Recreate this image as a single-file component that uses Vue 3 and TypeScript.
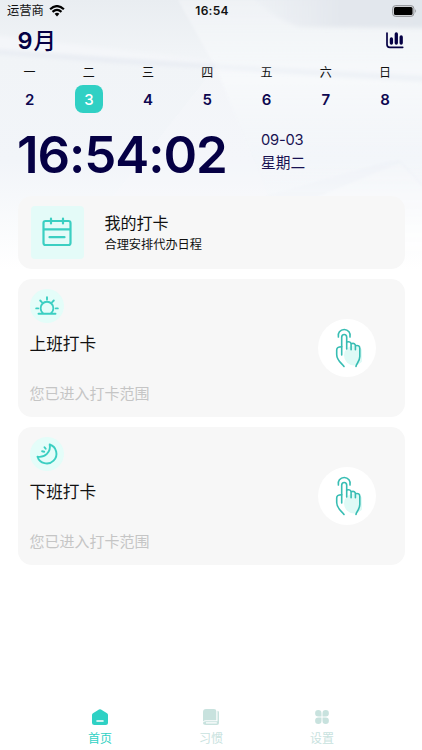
<script setup lang="ts">
interface Day { label: string; date: number }
interface Shift { title: string; hint: string; kind: 'sun' | 'moon' }
interface Tab { label: string; icon: 'home' | 'book' | 'grid'; active: boolean }

const selected = 3
const days: Day[] = ['一', '二', '三', '四', '五', '六', '日'].map((label, i) => ({ label, date: i + 2 }))
const shifts: Shift[] = [
  { title: '上班打卡', hint: '您已进入打卡范围', kind: 'sun' },
  { title: '下班打卡', hint: '您已进入打卡范围', kind: 'moon' },
]
const tabs: Tab[] = [
  { label: '首页', icon: 'home', active: true },
  { label: '习惯', icon: 'book', active: false },
  { label: '设置', icon: 'grid', active: false },
]
</script>

<template>
  <div class="screen">
    <svg class="backdrop" viewBox="0 0 422 270" preserveAspectRatio="none" aria-hidden="true">
      <defs>
        <linearGradient id="base" x1="0" y1="0" x2="0" y2="1">
          <stop offset="0" stop-color="#e9edf1" />
          <stop offset=".2" stop-color="#f1f4f7" />
          <stop offset=".6" stop-color="#f2f5f9" />
          <stop offset="1" stop-color="#ffffff" />
        </linearGradient>
        <linearGradient id="beam" x1="0" y1="0" x2="0" y2="1">
          <stop offset="0" stop-color="#f3f5f8" stop-opacity=".6" />
          <stop offset=".4" stop-color="#f8fafc" stop-opacity=".8" />
          <stop offset="1" stop-color="#f5f7fa" stop-opacity="0" />
        </linearGradient>
        <linearGradient id="corner" x1="0" y1="0" x2="1" y2="0">
          <stop offset="0" stop-color="#e5e9ef" stop-opacity=".2" />
          <stop offset=".5" stop-color="#e3e7ed" />
          <stop offset="1" stop-color="#e1e6ec" />
        </linearGradient>
        <linearGradient id="facet" x1="0" y1="0" x2="0" y2="1">
          <stop offset="0" stop-color="#f0f3f8" />
          <stop offset="1" stop-color="#f4f6fa" stop-opacity="0" />
        </linearGradient>
        <linearGradient id="lit" x1="0" y1="0" x2="0" y2="1">
          <stop offset="0" stop-color="#f7f9fb" stop-opacity=".5" />
          <stop offset="1" stop-color="#fff" stop-opacity=".8" />
        </linearGradient>
        <filter id="soft" x="-10%" y="-30%" width="120%" height="160%"><feGaussianBlur stdDeviation="2" /></filter>
        <filter id="edge" x="-10%" y="-20%" width="120%" height="140%"><feGaussianBlur stdDeviation="1" /></filter>
      </defs>
      <rect width="422" height="270" fill="url(#base)" />
      <path d="M178 0H430V200H270L216 68Z" fill="url(#beam)" filter="url(#edge)" />
      <path d="M255 -10H430V28L300 27Q280 22 255 0Z" fill="url(#corner)" filter="url(#soft)" />
      <path d="M-10 35L216 61V65L120 59L-10 49Z" fill="#f4f6f9" filter="url(#soft)" />
      <path d="M-10 50L120 59L216 65V68L110 62L-10 53Z" fill="#e6eaf2" filter="url(#soft)" />
      <path d="M216 65L430 76V82L340 77L216 68Z" fill="#edf1f6" filter="url(#soft)" />
      <path d="M216 66L110 200H270Z" fill="#f7f9fb" opacity=".3" />
      <path d="M265 196L385 162L400 160L430 192V225H265Z" fill="url(#facet)" filter="url(#edge)" />
      <path d="M310 200L400 163L430 195V250H310Z" fill="url(#lit)" filter="url(#edge)" />
    </svg>

    <header class="status">
      <div class="carrier">
        <span>运营商</span>
        <svg width="16" height="12" viewBox="0 0 16 12">
          <g fill="none" stroke="#000" stroke-width="2.2">
            <path d="M1.1 4.3Q8-2.1 14.9 4.3" /><path d="M3.5 6.9Q8 2.9 12.5 6.9" />
          </g>
          <path d="M5.6 8.8Q8 6.9 10.4 8.8L8 11.4Z" fill="#000" />
        </svg>
      </div>
      <span class="status-time">16:54</span>
      <svg class="battery" width="25" height="12" viewBox="0 0 25 12">
        <rect x=".6" y=".6" width="21.3" height="10.8" rx="3" fill="#d5d7da" stroke="#92959a" />
        <rect x="2" y="2" width="18.5" height="8" rx="1.5" />
        <path d="M23.3 4Q25 6 23.3 8Z" fill="#85888d" />
      </svg>
    </header>

    <div class="heading">
      <h1><span>9</span>月</h1>
      <svg width="18" height="17" viewBox="0 0 18 17" fill="none" stroke="#050044" stroke-linecap="round">
        <path d="M1 1V12.5Q1 15.3 3.8 15.3H16.7" stroke-width="1.7" />
        <path d="M5.4 7V11M10.3 2V11M15.2 5V11" stroke-width="3.3" />
      </svg>
    </div>

    <div class="week">
      <div v-for="day in days" :key="day.date" class="day">
        <span class="weekday">{{ day.label }}</span>
        <span class="date" :class="{ selected: day.date === selected }">{{ day.date }}</span>
      </div>
    </div>

    <div class="now">
      <div class="clock">16:54:02</div>
      <div class="today"><span class="today-date">09-03</span><span>星期二</span></div>
    </div>

    <main class="cards">
      <section class="card plan">
        <div class="plan-icon">
          <svg width="30" height="30" viewBox="0 0 30 30" fill="none" stroke="#3bcfc2" stroke-width="2.2" stroke-linecap="round" stroke-linejoin="round">
            <rect x="1.5" y="4" width="27" height="24" rx="2" />
            <path d="M2 12.3H28M9 1.5V6.5M21 1.5V6.5M7.5 20.2H22.5" />
          </svg>
        </div>
        <div class="plan-text"><h2>我的打卡</h2><p>合理安排代办日程</p></div>
      </section>

      <section v-for="shift in shifts" :key="shift.kind" class="card shift">
        <div class="shift-info">
          <div class="badge">
            <svg v-if="shift.kind === 'sun'" width="24" height="20" viewBox="0 0 24 20" fill="none" stroke="#3bcfc2" stroke-width="1.9" stroke-linecap="round">
              <path d="M3.5 17.7H20.5M7.8 17A6.4 6.4 0 1 1 16.2 17M12 1.2V3.6M5.2 4.5L6.8 6.2M18.8 4.5L17.2 6.2M1.2 12.4H3.2M20.8 12.4H22.8" />
            </svg>
            <svg v-else width="24" height="24" viewBox="0 0 24 24" fill="none" stroke="#3bcfc2" stroke-width="1.9" stroke-linecap="round" stroke-linejoin="round">
              <path d="M14.7 2.5A9.7 9.7 0 1 1 2.5 14.7C9.8 16 16.2 10 14.7 2.5ZM7.1 9.3L9.2 9.7M9.5 5.2L10.7 6.8" />
            </svg>
          </div>
          <h2>{{ shift.title }}</h2>
          <p>{{ shift.hint }}</p>
        </div>
        <button class="punch" type="button">
          <svg width="30" height="42" viewBox="0 0 30 42" fill="none" stroke="#37bdb3" stroke-width="1.6" stroke-linecap="round" stroke-linejoin="round">
            <circle cx="22" cy="28.5" r="10" fill="#dffaf6" stroke="none" />
            <path d="M12 39.5C9.5 36 4.7 33.5 4.7 27.5V23C4.7 20.5 6.5 19.8 9.7 19.8" />
            <path d="M9.7 28V10.3Q9.7 7.5 12.2 7.5T14.7 10.3V22" />
            <path d="M14.7 15.1Q19.1 13.9 19.1 17.5V22.8M19.1 16.7Q23.4 15.5 23.4 19V22.8M23.4 18.7Q27.8 17.7 27.8 21.5V29.5C27.8 34.5 24.3 36.5 24 39.5" />
            <path d="M6.4 10A6 6 0 1 1 18 10" />
          </svg>
        </button>
      </section>
    </main>

    <nav class="tabs">
      <div v-for="tab in tabs" :key="tab.icon" class="tab" :class="{ active: tab.active }">
        <svg width="16" height="16" viewBox="0 0 16 16" fill="currentColor">
          <template v-if="tab.icon === 'home'">
            <path d="M7 .5Q8 0 9 .5L15 4.3Q16 5 16 6V13.5Q16 16 13.5 16H2.5Q0 16 0 13.5V6Q0 5 1 4.3Z" />
            <path d="M5 12H11" stroke="#fff" stroke-width="1.6" stroke-linecap="round" />
          </template>
          <template v-else-if="tab.icon === 'book'">
            <path d="M3 0H11Q13.3 0 13.3 2V11.2H3Q1 11.2 0 12.5V3Q0 0 3 0Z" />
            <path d="M14.5 1.8Q16 2 16 3.5V14Q16 16 14 16H3Q0 16 0 13.8Q.4 12.2 2.5 12.2H14.5ZM3 13.3V14.5H13.8V13.3Z" fill-rule="evenodd" />
          </template>
          <template v-else>
            <path d="M7.5 7.5H4.3A3.2 3.2 0 1 1 7.5 4.3ZM8.5 7.5V4.3A3.2 3.2 0 1 1 11.7 7.5ZM7.5 8.5V11.7A3.2 3.2 0 1 1 4.3 8.5ZM8.5 8.5H11.7A3.2 3.2 0 1 1 8.5 11.7Z" />
          </template>
        </svg>
        <span>{{ tab.label }}</span>
      </div>
    </nav>
  </div>
</template>

<style>
body { background: #fff; }
</style>

<style scoped>
.screen {
  position: relative;
  display: flex;
  flex-direction: column;
  height: 750px;
  overflow: hidden;
  color: #111;
  font-family: Inter, "Noto Sans CJK SC", sans-serif;
}
.screen > :not(.backdrop) { position: relative; }
.screen > .backdrop { position: absolute; top: 0; left: 0; width: 422px; height: 270px; }
h1, h2, p { margin: 0; font-weight: 400; }
svg { display: block; flex: none; }

.status {
  display: grid;
  grid-template-columns: 1fr auto 1fr;
  grid-template-rows: 22px;
  align-items: center;
  height: 22px;
  padding: 0 5px 0 7px;
}
.carrier { display: flex; align-items: center; gap: 5px; font-size: 12.3px; line-height: 22px; }
.carrier svg { margin-bottom: 1px; }
.status-time { font-size: 12px; font-weight: 600; letter-spacing: .25px; line-height: 22px; }
.battery { justify-self: end; margin-bottom: 1px; }

.heading {
  display: flex;
  justify-content: space-between;
  align-items: center;
  height: 38px;
  padding: 0 18px 0 17.5px;
  color: #050044;
}
.heading h1 { display: flex; align-items: center; gap: 1px; font-size: 22.5px; font-weight: 500; line-height: 36px; }
.heading h1 span { font-size: 23.5px; font-weight: 600; line-height: 38px; }
.heading svg { margin-bottom: 1px; }

.week { display: flex; width: 414.6px; height: 53px; }
.day { flex: 1; display: flex; flex-direction: column; align-items: center; }
.weekday { height: 25px; font-size: 12px; line-height: 25px; }
.date {
  width: 28px;
  height: 28px;
  border-radius: 8px;
  color: #0d0750;
  font-size: 15px;
  font-weight: 600;
  line-height: 29px;
  text-align: center;
}
.date.selected { background: #30d0c4; color: #fff; font-weight: 500; }

.now { display: flex; height: 82.5px; padding: 0 17px; color: #050044; }
.clock {
  width: 244px;
  font-size: 51px;
  font-weight: 560;
  letter-spacing: -1.05px;
  line-height: 84px;
  white-space: nowrap;
}
.today { display: flex; flex-direction: column; padding-top: 16px; font-size: 14.7px; line-height: 23px; color: #181252; }
.today-date { letter-spacing: -.2px; }

.cards { display: flex; flex-direction: column; gap: 10px; padding: 0 17.5px; }
.card { display: flex; background: #f7f7f7; border-radius: 14px; }
.plan { height: 73.7px; align-items: center; padding-left: 13px; gap: 21px; }
.plan-icon { display: grid; place-items: center; width: 53px; height: 53px; border-radius: 4px; background: #e4fbf8; }
.plan-text { display: flex; flex-direction: column; padding-top: 2px; }
.plan-text h2 { font-size: 16px; line-height: 22px; }
.plan-text p { font-size: 12.2px; line-height: 21px; }
.shift { height: 137.9px; align-items: center; justify-content: space-between; padding: 0 28.5px 0 12px; }
.shift-info { display: flex; flex-direction: column; height: 138px; }
.badge {
  display: grid;
  place-items: center;
  width: 34px;
  height: 34px;
  margin-top: 10px;
  border-radius: 50%;
  background: #e4fdf9;
}
.shift-info h2 { margin-top: 9px; font-size: 16.7px; line-height: 24px; }
.shift-info p { margin-top: 27px; color: #c5c5c5; font-size: 15px; line-height: 22px; }
.punch {
  display: grid;
  place-items: center;
  width: 58px;
  height: 58px;
  padding: 0;
  border: 0;
  border-radius: 50%;
  background: #fff;
}

.tabs { display: flex; justify-content: center; margin-top: auto; height: 41px; }
.tab { display: flex; flex-direction: column; align-items: center; width: 111px; color: #c8e2de; font-size: 12px; line-height: 24px; }
.tab span { margin-top: 2px; }
.tab.active { color: #2fd1c4; }
</style>
